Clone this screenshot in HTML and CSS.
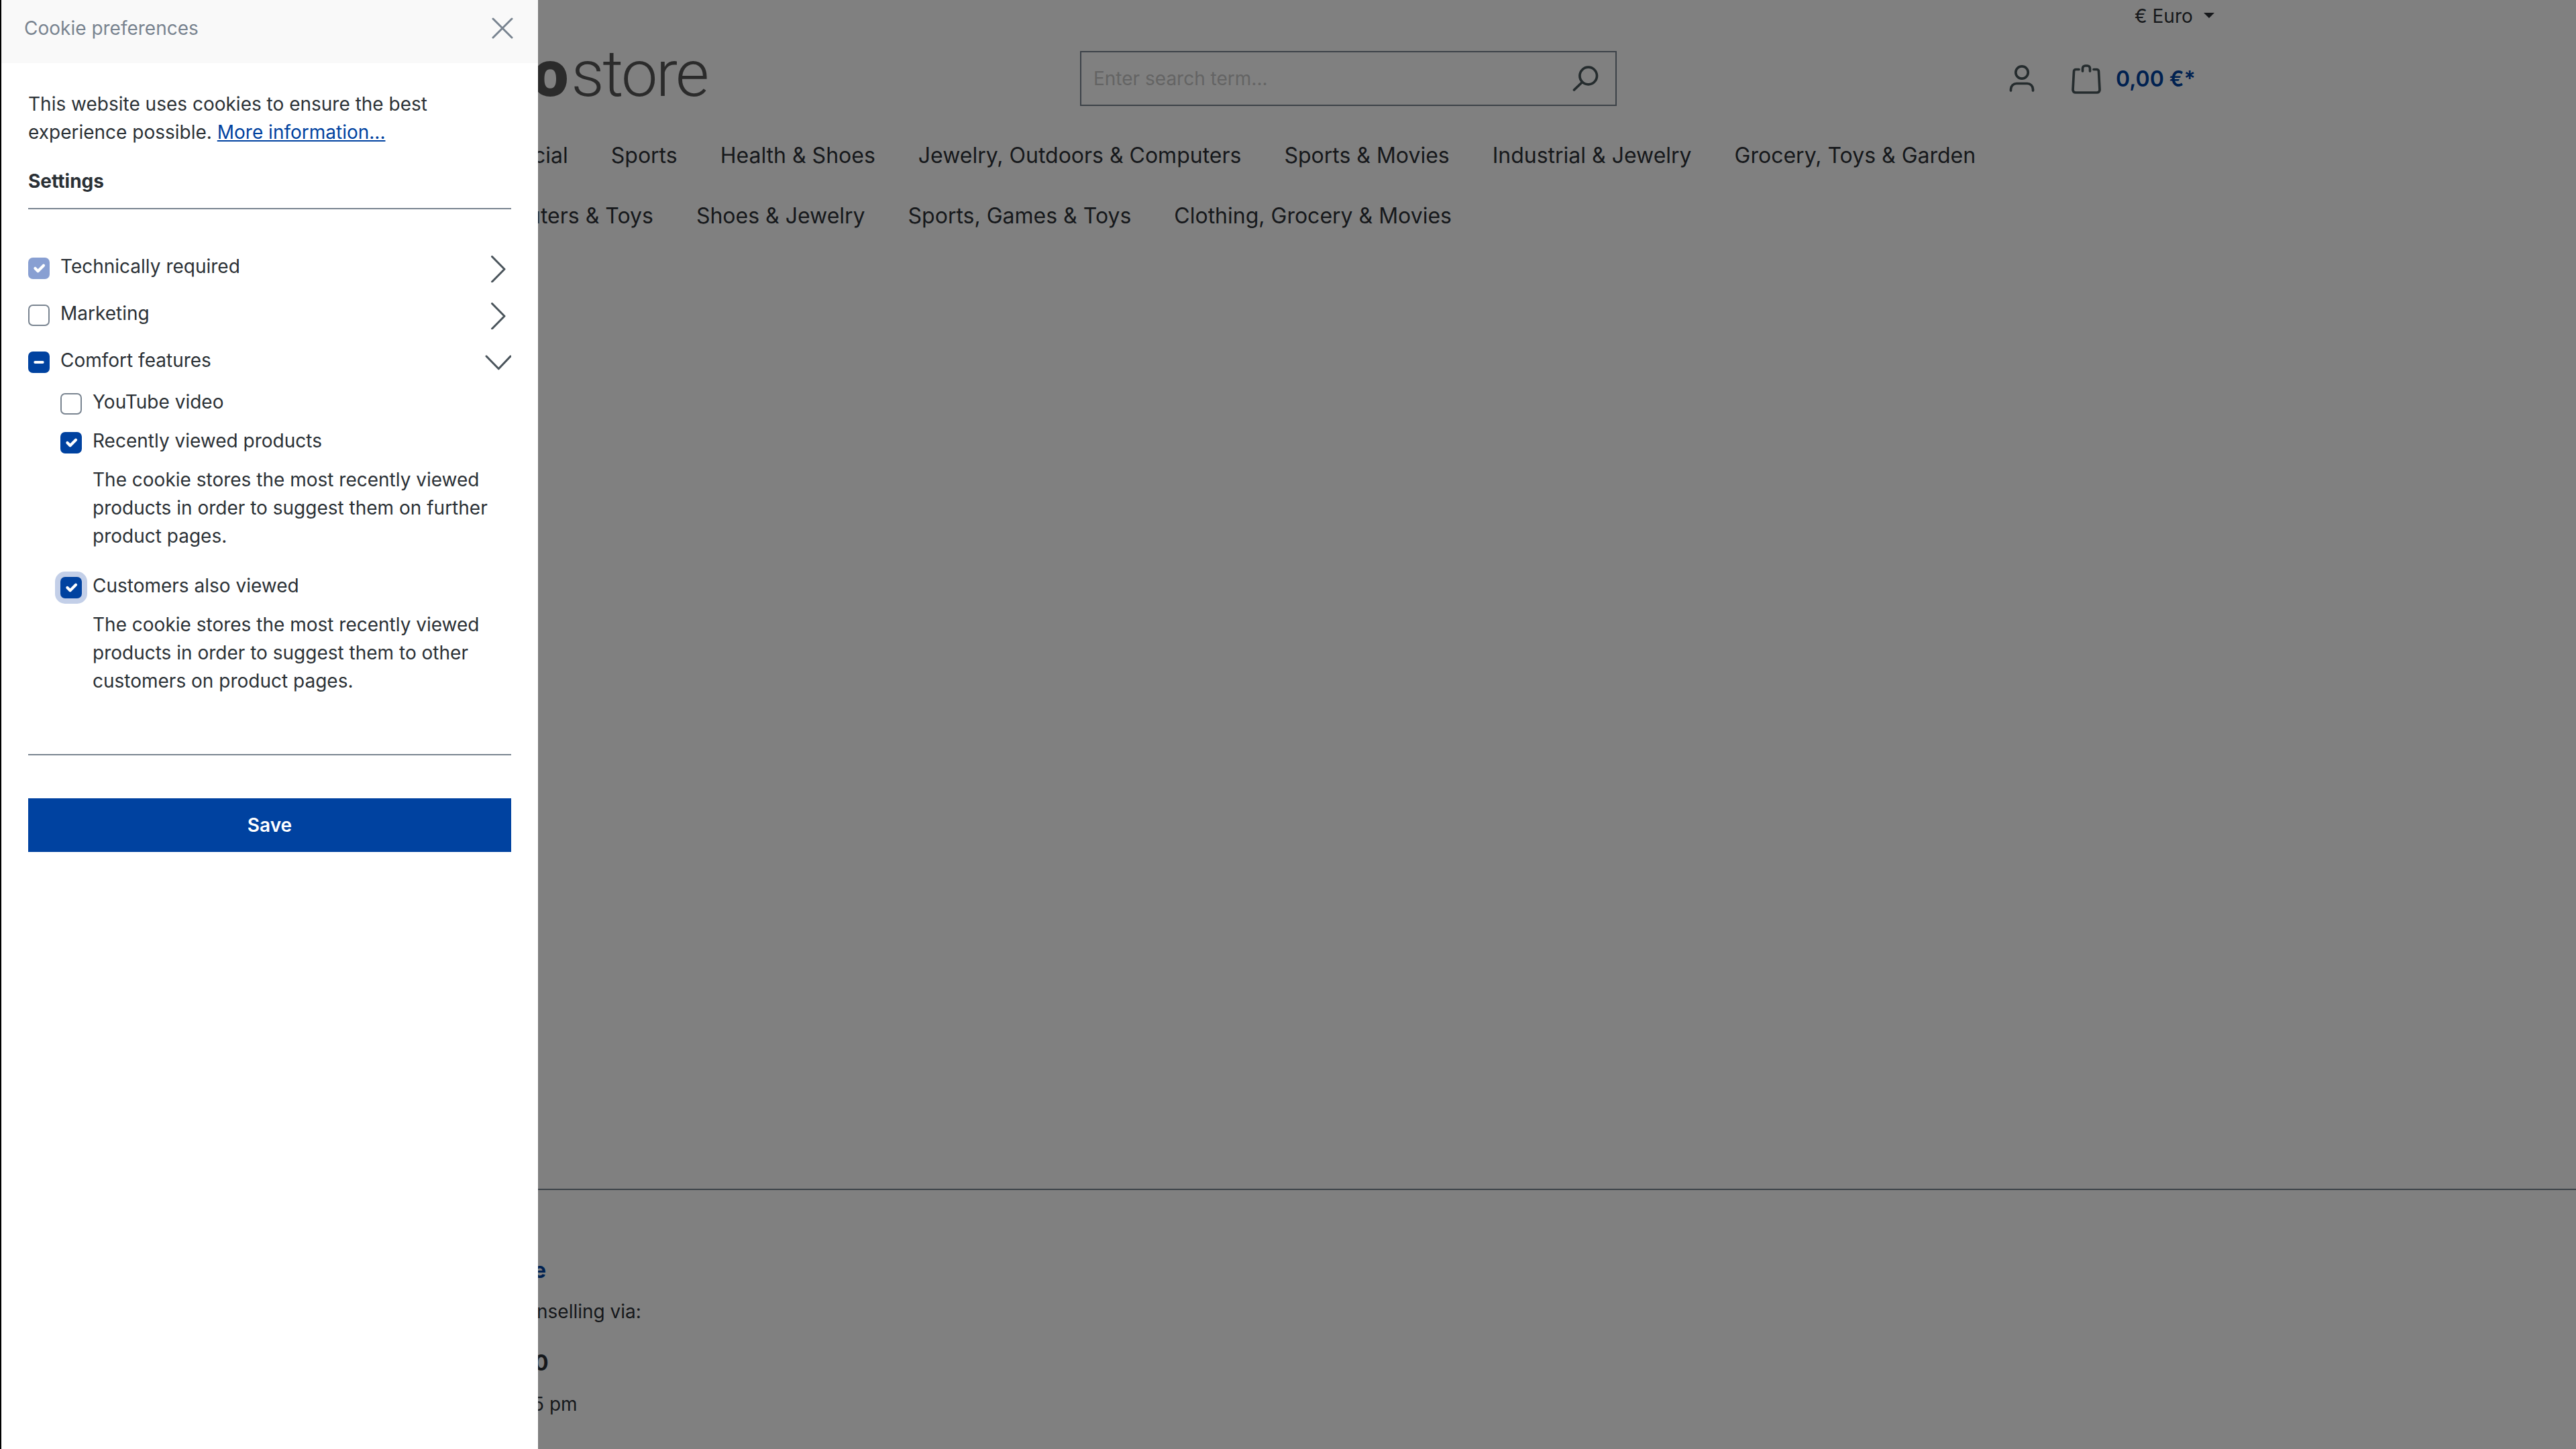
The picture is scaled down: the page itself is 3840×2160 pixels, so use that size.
FILE: index.html
```
<!DOCTYPE html>
<html lang="en">
<head>
  <meta charset="UTF-8">
  <meta name="viewport" content="width=device-width, initial-scale=1.0">
  <title>Demostore</title>
  <link rel="stylesheet" href="styles.css">
</head>
<body>
  <aside class="offcanvas">
    <button class="offcanvas-close">
      <span>Cookie preferences</span>
      <svg class="close-icon" width="32" height="32" viewBox="0 0 32 32"><path d="M2 2L30 30M30 2L2 30"/></svg>
    </button>

    <div class="offcanvas-body">
      <p class="intro">This website uses cookies to ensure the best experience possible. <a href="#">More information...</a></p>
      <div class="settings-title">Settings</div>

      <div class="cookie-list">
        <div class="cookie-row">
          <span class="checkbox checked disabled"><svg viewBox="0 0 20 20"><path d="M6 10l3 3 6-6"/></svg></span>
          <label>Technically required</label>
          <svg class="chevron" width="40" height="40" viewBox="0 0 40 40"><path d="M11.500 1.500L30 20.300L11.500 39"/></svg>
        </div>
        <div class="cookie-row">
          <span class="checkbox"></span>
          <label>Marketing</label>
          <svg class="chevron" width="40" height="40" viewBox="0 0 40 40"><path d="M11.500 1.500L30 20.300L11.500 39"/></svg>
        </div>
        <div class="cookie-row">
          <span class="checkbox checked"><svg viewBox="0 0 20 20"><path d="M6 10h8"/></svg></span>
          <label>Comfort features</label>
          <svg class="chevron" width="40" height="40" viewBox="0 0 40 40"><path d="M3 10L21.300 28.800L39 10"/></svg>
        </div>

        <div class="cookie-sub">
          <div class="cookie-row">
            <span class="checkbox"></span>
            <label>YouTube video</label>
          </div>
          <div class="cookie-row">
            <span class="checkbox checked"><svg viewBox="0 0 20 20"><path d="M6 10l3 3 6-6"/></svg></span>
            <label>Recently viewed products</label>
          </div>
          <p>The cookie stores the most recently viewed products in order to suggest them on further product pages.</p>
          <div class="cookie-row">
            <span class="checkbox checked focus"><svg viewBox="0 0 20 20"><path d="M6 10l3 3 6-6"/></svg></span>
            <label>Customers also viewed</label>
          </div>
          <p>The cookie stores the most recently viewed products in order to suggest them to other customers on product pages.</p>
        </div>
      </div>

      <button class="btn-save">Save</button>
    </div>
  </aside>

  <div class="page">
    <div class="top-bar">€ Euro <span class="caret"></span></div>

    <header class="header">
      <div class="logo"><b>o</b>store</div>
      <div class="search">
        <span>Enter search term...</span>
        <svg width="40" height="40" viewBox="0 0 40 40"><circle cx="23.700" cy="16" r="12.800"/><path d="M14.500 25.500L2.500 37"/></svg>
      </div>
      <div class="actions">
        <svg class="account" width="44" height="44" viewBox="0 0 44 44"><circle cx="22" cy="12" r="9.200"/><path d="M5.500 39V37a8.500 8.500 0 0 1 8.500-8.500H30a8.500 8.500 0 0 1 8.500 8.500V39"/></svg>
        <svg class="cart" width="44" height="44" viewBox="0 0 44 44"><path d="M11 7.500H6.500a3 3 0 0 0-3 3L2 38a4 4 0 0 0 4 4H38a4 4 0 0 0 4-4L40.500 10.500a3 3 0 0 0-3-3H33M16.500 10V6a4 4 0 0 1 4-4h3a4 4 0 0 1 4 4V10"/></svg>
        <span class="total">0,00 €*</span>
      </div>
    </header>

    <nav class="nav">
      <div class="nav-row first">
        <a>cial</a>
        <a>Sports</a>
        <a>Health &amp; Shoes</a>
        <a>Jewelry, Outdoors &amp; Computers</a>
        <a>Sports &amp; Movies</a>
        <a>Industrial &amp; Jewelry</a>
        <a>Grocery, Toys &amp; Garden</a>
      </div>
      <div class="nav-row second">
        <a>uters &amp; Toys</a>
        <a>Shoes &amp; Jewelry</a>
        <a>Sports, Games &amp; Toys</a>
        <a>Clothing, Grocery &amp; Movies</a>
      </div>
    </nav>

    <footer class="footer">
      <div class="footer-title">e</div>
      <div class="footer-text">nselling via:</div>
      <div class="footer-phone">0</div>
      <div class="footer-hours">5 pm</div>
    </footer>
  </div>
</body>
</html>
```

FILE: styles.css
```
* {
  box-sizing: border-box;
}

body {
  margin: 0;
  height: 2160px;
  display: flex;
  overflow: hidden;
  background: #808080;
  color: #2b3136;
  font-family: Inter, sans-serif;
  font-size: 28px;
  line-height: 42px;
}

svg {
  fill: none;
  stroke-linecap: round;
  stroke-linejoin: round;
  flex-shrink: 0;
}

/* cookie offcanvas */
.offcanvas {
  width: 802px;
  flex-shrink: 0;
  height: 2160px;
  background: #fff;
  border-left: 2px solid #000;
  position: relative;
  z-index: 2;
}

.offcanvas-close {
  display: flex;
  align-items: center;
  justify-content: space-between;
  width: 100%;
  height: 94px;
  padding: 0 37px 10px 34px;
  border: none;
  background: #f9f9f9;
  color: #798490;
  font: inherit;
}

.close-icon {
  stroke: #798490;
  stroke-width: 3;
}

.offcanvas-body {
  padding: 40px;
}

.intro {
  margin: 0 0 31px;
}

.intro a {
  color: #0042a0;
  text-decoration-thickness: 2px;
  text-underline-offset: 2px;
}

.settings-title {
  height: 63px;
  border-bottom: 2px solid #798490;
  font-weight: 700;
}

.cookie-list {
  padding-top: 64px;
  height: 814px;
  border-bottom: 2px solid #798490;
}

.cookie-row {
  display: flex;
  height: 42px;
  margin-bottom: 28px;
}

.cookie-row label {
  margin-left: 16px;
  flex: 1;
}

.checkbox {
  width: 32px;
  height: 32px;
  margin-top: 8px;
  border: 2px solid #798490;
  border-radius: 7px;
  background: #fff;
}

.checkbox.checked {
  background: #0042a0;
  border-color: #0042a0;
}

.checkbox.disabled {
  background: #889fd2;
  border-color: #889fd2;
}

.checkbox.focus {
  box-shadow: 0 0 0 8px #c3cfe8;
}

.checkbox svg {
  display: block;
  width: 28px;
  height: 28px;
  stroke: #fff;
  stroke-width: 3;
}

.chevron {
  margin-top: 5px;
  stroke: #4a545b;
  stroke-width: 3;
}

.cookie-sub {
  padding-left: 48px;
  margin-top: -8px;
}

.cookie-sub .cookie-row {
  margin-bottom: 16px;
}

.cookie-sub p {
  margin: 0 0 32px 48px;
}

.btn-save {
  display: block;
  width: 100%;
  height: 80px;
  margin-top: 64px;
  border: none;
  background: #0042a0;
  color: #fff;
  font: inherit;
  font-weight: 600;
}

/* storefront behind the backdrop */
.page {
  flex: 1;
  color: #16181b;
}

.top-bar {
  display: flex;
  align-items: center;
  height: 48px;
  padding-left: 2380px;
}

.caret {
  margin: 0 0 2px 16px;
  border: 8px solid transparent;
  border-top-color: #16181b;
  border-bottom: 0;
}

.header {
  display: flex;
  height: 132px;
  padding-top: 28px;
}

.logo {
  width: 817px;
  margin-top: -11px;
  margin-left: -9px;
  font-family: Roboto, sans-serif;
  font-size: 97px;
  line-height: 90px;
  font-weight: 300;
  letter-spacing: -2.5px;
  color: #2b2b2b;
}

.logo b {
  font-weight: 900;
  letter-spacing: 4px;
}

.search {
  display: flex;
  align-items: center;
  justify-content: space-between;
  width: 800px;
  height: 82px;
  padding: 0 24px 0 18px;
  border: 2px solid #3c4248;
  color: #646464;
}

.search svg,
.actions svg {
  stroke: #252c2e;
  stroke-width: 3.7;
}

.actions {
  display: flex;
  align-items: center;
  height: 84px;
  margin-left: 582px;
}

.cart {
  margin-left: 52px;
}

.total {
  margin-left: 22px;
  font-size: 32px;
  font-weight: 600;
  color: #002150;
}

.nav {
  height: 1592px;
  padding-top: 28px;
  font-size: 32px;
  line-height: 48px;
}

.nav-row {
  display: flex;
  gap: 64px;
  height: 90px;
  white-space: nowrap;
}

.nav-row.first {
  margin-left: -7px;
}

.nav-row.second {
  margin-left: -15px;
}

.footer {
  padding-top: 96px;
  border-top: 2px solid #3c4248;
}

.footer-title {
  margin-left: -7px;
  font-size: 32px;
  font-weight: 700;
  line-height: 48px;
  color: #002150;
}

.footer-text {
  margin: 16px 0 0 -2px;
}

.footer-phone {
  margin: 32px 0 0 -6px;
  font-size: 32px;
  font-weight: 700;
  line-height: 48px;
}

.footer-hours {
  margin: 16px 0 0 -8px;
}
```
